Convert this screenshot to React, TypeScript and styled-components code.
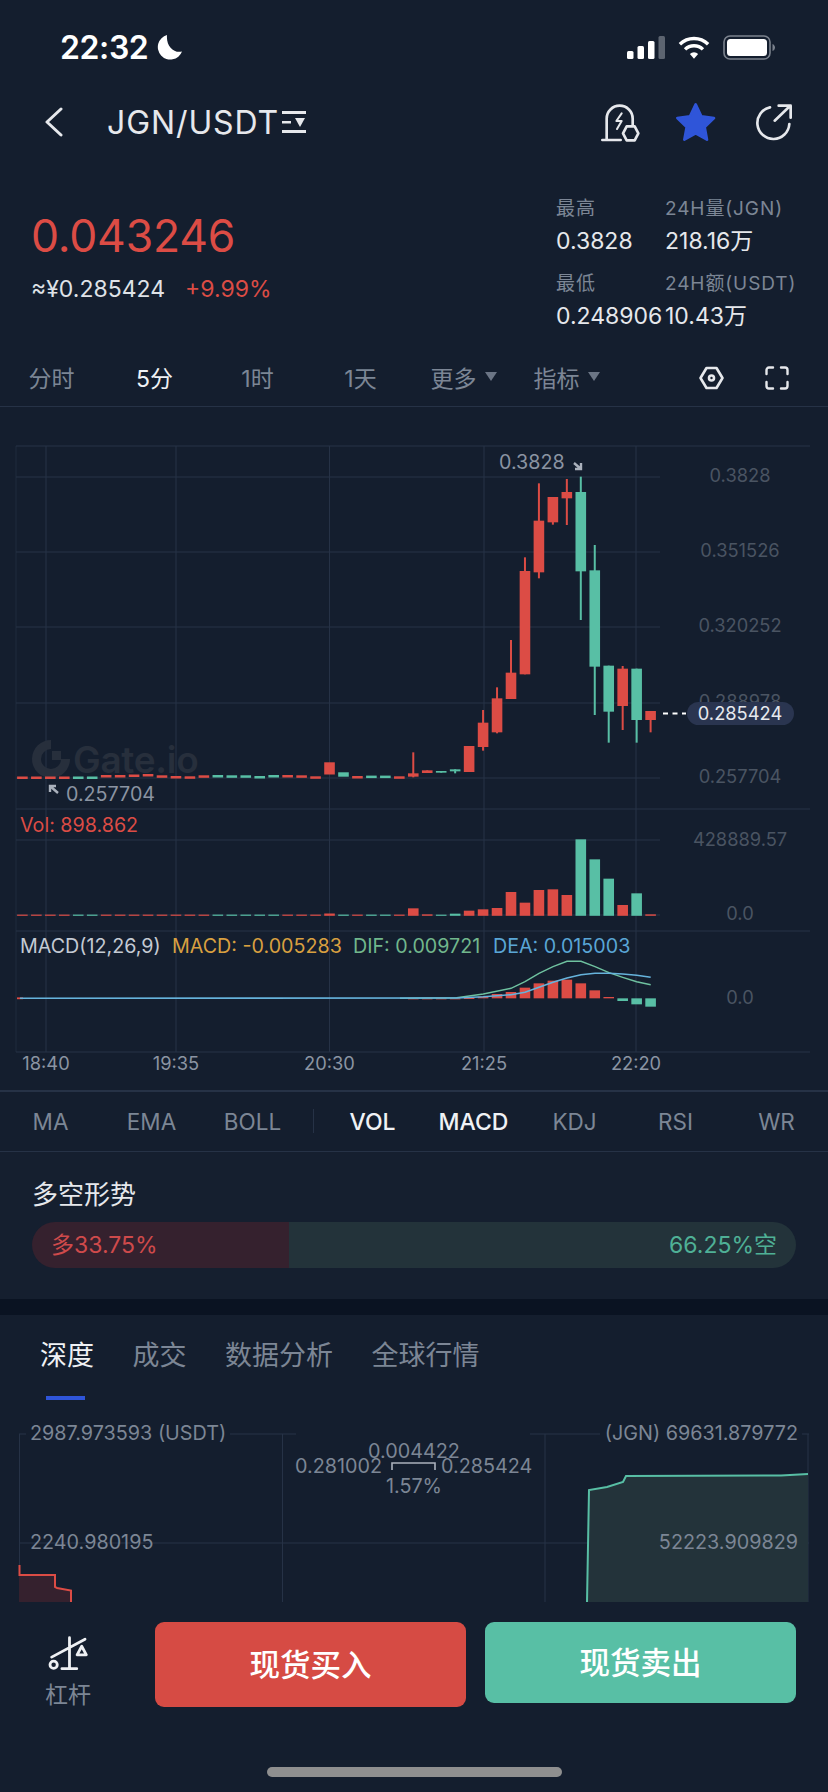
import React from "react";
import styled, { createGlobalStyle } from "styled-components";

const RED = "#dc4c45";
const GREEN = "#58bfa5";
const GRID = "#263246";
const AXIS = "#4a5462";
const MUTED = "#7c8695";
const SANS = `Inter, "Noto Sans CJK SC", sans-serif`;

const GlobalStyle = createGlobalStyle`
  html, body {
    margin: 0;
    padding: 0;
    background: #141e2e;
  }
`;

// candles: [colour, open/top, close/bottom, wick top, wick bottom] in page px
type Candle = { up: boolean; top: number; bottom: number; hi?: number; lo?: number };

const flat = (up: boolean, y: number): Candle => ({ up, top: y, bottom: y + 2.5 });
const fromZoom = (up: boolean, top: number, bottom: number, hi: number, lo: number): Candle => ({
  up,
  top: 440 + top / 3,
  bottom: 440 + bottom / 3,
  hi: 440 + hi / 3,
  lo: 440 + lo / 3,
});

const candles: Candle[] = [
  flat(true, 776.5), flat(true, 776.5), flat(true, 776.5), flat(true, 776.5),
  flat(false, 776.5), flat(false, 776.5), { up: true, top: 775, bottom: 777.5 },
  flat(true, 775), flat(true, 774.5), flat(true, 774), flat(true, 775.3),
  flat(true, 776), flat(true, 776.3), flat(true, 775.3), flat(false, 775),
  flat(false, 775.3), flat(false, 775.3), flat(false, 776), flat(false, 775),
  flat(true, 775), flat(true, 775.3), flat(true, 776.3),
  { up: true, top: 762.3, bottom: 774.5 },
  { up: false, top: 772.3, bottom: 776.7 },
  flat(true, 776), flat(false, 775.6), flat(false, 775.6), flat(true, 776.3),
  fromZoom(true, 1000, 1010, 937, 1012),
  fromZoom(true, 991, 999, 991, 999),
  fromZoom(false, 993, 998, 993, 998),
  fromZoom(false, 988, 994, 988, 1000),
  fromZoom(true, 918, 996, 918, 996),
  fromZoom(true, 848, 921, 810, 932),
  fromZoom(true, 775, 877, 742, 880),
  fromZoom(true, 698, 777, 600, 777),
  fromZoom(true, 393, 703, 352, 703),
  fromZoom(true, 242, 397, 130, 415),
  fromZoom(true, 171, 247, 171, 254),
  fromZoom(true, 156, 175, 117, 255),
  fromZoom(false, 156, 394, 110, 540),
  fromZoom(false, 391, 680, 315, 825),
  fromZoom(false, 677, 815, 677, 908),
  fromZoom(true, 686, 798, 678, 870),
  fromZoom(false, 686, 840, 686, 908),
  fromZoom(true, 813, 840, 813, 877),
];

// volume bar tops for the last 18 candles, everything before sits on the base line
const volTops = [265, 283, 284, 281, 272, 268, 264, 216, 248, 210, 208, 225, 58, 118, 176, 255, 220, 283];
const macdTops = [535, 535, 535, 535, 534, 530, 522, 516, 503, 490, 482, 479, 490, 511, 531, 543, 553, 560];

const difLine = "400,998.3 456.7,997.7 483.3,994 511,988.3 525,981.7 539,973.3 553,966.7 567,961.3 581,961.3 595,966.7 609,972.7 622.7,977.3 636.7,981.7 650.7,984.7";
const deaLine = "20,998.3 456.7,998 483.3,996.7 511,994.7 525,992.3 539,987.3 553,982.3 567,978 581,974.7 595,973.3 609,973.3 622.7,974 636.7,975.3 650.7,977.3";

const candleX = (i: number) => 22.4 + 13.96 * i;

const priceRows = [477, 552, 627, 703, 778];
const priceLabels = ["0.3828", "0.351526", "0.320252", "0.288978", "0.257704"];
const timeCols = [46, 176, 329.5, 484, 636];
const timeLabels = ["18:40", "19:35", "20:30", "21:25", "22:20"];

const KlineChart: React.FC = () => (
  <ChartSvg viewBox="0 407 828 683">
    {[446, 809, 931, 1052].map((y) => (
      <line key={y} x1="16" x2="810" y1={y} y2={y} stroke={GRID} />
    ))}
    {[...priceRows, 840, 915].map((y) => (
      <line key={y} x1="16" x2="660" y1={y} y2={y} stroke={GRID} />
    ))}
    <line x1="16" x2="16" y1="446" y2="1052" stroke={GRID} opacity="0.6" />
    {timeCols.map((x) => (
      <line key={x} x1={x} x2={x} y1="446" y2="1052" stroke={GRID} />
    ))}

    <g fill="#272f3c">
      <path d="M51 740a19 19 0 1 0 19 19h-9a10 10 0 1 1-10-10z" />
      <rect x="52" y="751" width="9" height="9" />
    </g>
    <WaterMark x="73" y="773">Gate.io</WaterMark>

    {candles.map((c, i) => {
      const x = candleX(i);
      const color = c.up ? RED : GREEN;
      return (
        <g key={i} fill={color}>
          {c.hi !== undefined && (
            <rect x={x - 1} y={c.hi} width="2" height={(c.lo ?? c.bottom) - c.hi} />
          )}
          <rect x={x - 5.3} y={c.top} width="10.6" height={c.bottom - c.top} />
        </g>
      );
    })}

    {candles.map((c, i) => {
      const x = candleX(i);
      const offset = i - 28;
      const top = offset >= 0 ? 820 + volTops[offset] / 3 : i === 22 ? 913.5 : 914.6;
      return (
        <rect key={i} x={x - 5.3} y={top} width="10.6" height={915.8 - top} fill={c.up ? RED : GREEN} />
      );
    })}

    <rect x="17" y="997.4" width="6" height="1.800" fill={RED} />
    {macdTops.map((t, n) => {
      const x = candleX(n + 28);
      const top = Math.min(t, 535);
      const bottom = Math.max(t, 535);
      return (
        <rect
          key={n}
          x={x - 5.3}
          y={820 + top / 3}
          width="10.6"
          height={Math.max((bottom - top) / 3, 1)}
          fill={t > 535 ? GREEN : RED}
        />
      );
    })}
    <polyline points={difLine} fill="none" stroke="#6fc2a0" strokeWidth="1.4" />
    <polyline points={deaLine} fill="none" stroke="#66b3dc" strokeWidth="1.6" />

    <HighArrow d="M574 463l7 6m0-6v6h-6" />
    <LegendText x="499" y="469" fill="#8b94a2">0.3828</LegendText>
    <HighArrow d="M58 793l-8-7m0 6v-6h6" />
    <LegendText x="66" y="801" fill="#8b94a2">0.257704</LegendText>

    {priceRows.map((y, i) => (
      <AxisText key={y} x="740" y={y + 5} fill={AXIS} textAnchor="middle">
        {priceLabels[i]}
      </AxisText>
    ))}
    <line x1="663" x2="686" y1="713.5" y2="713.5" stroke="#fff" strokeWidth="2" strokeDasharray="5 4.5" />
    <rect x="687" y="702" width="107" height="23" rx="11.5" fill="#2a3550" />
    <AxisText x="740" y="719.5" fill="#e6e9ee" textAnchor="middle">0.285424</AxisText>

    <LegendText x="20" y="831.500" fill={RED}>Vol: 898.862</LegendText>
    <AxisText x="740" y="846" fill={AXIS} textAnchor="middle">428889.57</AxisText>
    <AxisText x="740" y="920" fill={AXIS} textAnchor="middle">0.0</AxisText>

    <LegendText x="20" y="952.500" fill="#c4cad3">MACD(12,26,9)</LegendText>
    <LegendText x="172" y="952.500" fill="#d9a040">MACD: -0.005283</LegendText>
    <LegendText x="353" y="952.500" fill="#71b78c">DIF: 0.009721</LegendText>
    <LegendText x="493" y="952.500" fill="#5aa6d6">DEA: 0.015003</LegendText>
    <AxisText x="740" y="1004" fill={AXIS} textAnchor="middle">0.0</AxisText>

    {timeCols.map((x, i) => (
      <AxisText key={x} x={x} y="1070" fill="#8b94a2" textAnchor="middle">
        {timeLabels[i]}
      </AxisText>
    ))}
  </ChartSvg>
);

const DepthChart: React.FC = () => (
  <DepthSvg viewBox="0 1402 828 200">
    <line x1="19" x2="296" y1="1434" y2="1434" stroke={GRID} />
    <line x1="530" x2="809" y1="1434" y2="1434" stroke={GRID} />
    <line x1="19" x2="809" y1="1543" y2="1543" stroke={GRID} />
    {[19.5, 282.5, 545, 808].map((x) => (
      <line key={x} x1={x} x2={x} y1="1434" y2="1602" stroke={GRID} />
    ))}
    <path d="M19 1565v10h36v12l2 1 14 2v12H19z" fill="#35212e" />
    <path d="M19.5 1565v10H55v12l2 1 14 2.5V1602" fill="none" stroke={RED} strokeWidth="2" />
    <path d="M587 1602l2-112 18-3 16-5 3-6 155-.5 27-1.5V1602z" fill="#23333a" />
    <path d="M587 1602l2-112 18-3 16-5 3-6 155-.5 27-1.5" fill="none" stroke={GREEN} strokeWidth="2" />

    <rect x="26" y="1422" width="204" height="24" fill="#141e2e" />
    <rect x="600" y="1422" width="202" height="24" fill="#141e2e" />
    <DepthText x="30" y="1440" fill={MUTED}>2987.973593 (USDT)</DepthText>
    <DepthText x="798" y="1440" fill={MUTED} textAnchor="end">(JGN) 69631.879772</DepthText>
    <DepthText x="414" y="1458" fill={MUTED} textAnchor="middle">0.004422</DepthText>
    <DepthText x="382" y="1473" fill={MUTED} textAnchor="end">0.281002</DepthText>
    <path d="M392 1470v-7h43v7" fill="none" stroke="#aab1bc" strokeWidth="1.6" />
    <DepthText x="441" y="1473" fill={MUTED}>0.285424</DepthText>
    <DepthText x="414" y="1493" fill={MUTED} textAnchor="middle">1.57%</DepthText>
    <DepthText x="30" y="1549" fill={MUTED}>2240.980195</DepthText>
    <DepthText x="798" y="1549" fill={MUTED} textAnchor="end">52223.909829</DepthText>
  </DepthSvg>
);

const SignalIcon = () => (
  <svg width="38" height="23" viewBox="0 0 38 23" fill="#fff">
    <rect x="0" y="15" width="6.500" height="8" rx="1.500" />
    <rect x="10.500" y="10" width="6.500" height="13" rx="1.500" />
    <rect x="21" y="5" width="6.500" height="18" rx="1.500" />
    <rect x="31.500" y="0" width="6.500" height="23" rx="1.500" fill="#5c6470" />
  </svg>
);

const WifiIcon = () => (
  <svg width="32" height="23" viewBox="0 0 34 24" fill="none" stroke="#fff" strokeWidth="3.6">
    <path d="M2 8.500a21.500 21.500 0 0 1 30 0" />
    <path d="M7.500 14a13.500 13.500 0 0 1 19 0" />
    <path d="M12.600 19a6 6 0 0 1 8.800 0L17 24z" fill="#fff" stroke="none" />
  </svg>
);

const BatteryIcon = () => (
  <svg width="52" height="25" viewBox="0 0 52 25">
    <rect x="1" y="1" width="46" height="23" rx="6" fill="none" stroke="#7b828d" strokeWidth="1.6" />
    <rect x="4" y="4" width="40" height="17" rx="3.500" fill="#fff" />
    <path d="M49.500 9v7c1.500-.5 2.500-2 2.500-3.500S51 9.500 49.500 9z" fill="#7b828d" />
  </svg>
);

const MoonIcon = () => (
  <svg width="26" height="26" viewBox="0 0 26 26">
    <path d="M10 1a12.500 12.500 0 1 0 15 16.500c-8 2-16-5-15-16.500z" fill="#fff" />
  </svg>
);

const BellIcon = () => (
  <svg width="41.7" height="41.7" viewBox="90 60 125 125" fill="none" stroke="#e6e8ec" strokeWidth="8" strokeLinecap="round" strokeLinejoin="round">
    <path d="M97 177h55M110 175v-62a39 39 0 0 1 78 0v20" />
    <path d="M155 97l-16 23h16l-14 24" strokeWidth="6" />
    <path d="M170 136h24l11 21-11 21h-24l-11-21z" />
  </svg>
);

const StarIcon = () => (
  <svg width="45" height="43.300" viewBox="310 55 135 130">
    <path
      d="M378 68l17 36 38 5-28 27 7 38-34-19-34 19 7-38-28-27 38-5z"
      fill="#2f55d9"
      stroke="#2f55d9"
      strokeWidth="8"
      strokeLinejoin="round"
    />
  </svg>
);

const ShareIcon = () => (
  <svg width="45" height="40" viewBox="537 68 135 120" fill="none" stroke="#e6e8ec" strokeWidth="8" strokeLinecap="round" strokeLinejoin="round">
    <path d="M600 84a48 48 0 1 0 58 50" />
    <path d="M614 124l46-44M626 79h36v36" />
  </svg>
);

const ChevronLeft = () => (
  <svg width="20" height="30" viewBox="0 0 20 30" fill="none" stroke="#e6e8ec" strokeWidth="3" strokeLinecap="round" strokeLinejoin="round">
    <path d="M17 2L3 15l14 13" />
  </svg>
);

const PairMark = () => (
  <svg width="24" height="24" viewBox="0 0 24 24" fill="#e6e8ec">
    <rect x="0" y="1" width="24" height="3" />
    <rect x="0" y="11" width="9" height="2.500" />
    <path d="M13 8h10l-5 9z" />
    <rect x="0" y="20" width="24" height="3" />
  </svg>
);

const GaugeIcon = () => (
  <svg width="27" height="25" viewBox="0 0 27 25" fill="none" stroke="#e6e8ec" strokeWidth="2.600" strokeLinecap="round" strokeLinejoin="round">
    <path d="M8.500 2h10l6 10-6 10h-10l-6-10z" />
    <circle cx="13.500" cy="12" r="2.500" />
  </svg>
);

const ExpandIcon = () => (
  <svg width="24" height="24" viewBox="0 0 24 24" fill="none" stroke="#e6e8ec" strokeWidth="2.400" strokeLinecap="round" strokeLinejoin="round">
    <path d="M1.500 8V4a2.500 2.500 0 0 1 2.500-2.500h4M16 1.500h4A2.500 2.500 0 0 1 22.500 4v4M22.500 16v4a2.500 2.500 0 0 1-2.500 2.500h-4M8 22.500H4A2.500 2.500 0 0 1 1.500 20v-4" />
  </svg>
);

const LeverIcon = () => (
  <svg width="43" height="38" viewBox="50 25 130 115" fill="none" stroke="#eef0f3" strokeWidth="8.500" strokeLinecap="round" strokeLinejoin="round">
    <path d="M64 95L165 41M118 36v94M95 130h45" />
    <circle cx="70" cy="118" r="11" />
    <path d="M155 62l-14 26h28z" />
  </svg>
);

const intervals = [
  { label: "分时" },
  { label: "5分", active: true },
  { label: "1时" },
  { label: "1天" },
  { label: "更多", menu: true },
  { label: "指标", menu: true },
];

const indicators = [
  { label: "MA" },
  { label: "EMA" },
  { label: "BOLL", divider: true },
  { label: "VOL", active: true },
  { label: "MACD", active: true },
  { label: "KDJ" },
  { label: "RSI" },
  { label: "WR" },
];

const stats = [
  { label: "最高", value: "0.3828" },
  { label: "24H量(JGN)", value: "218.16万" },
  { label: "最低", value: "0.248906" },
  { label: "24H额(USDT)", value: "10.43万" },
];

const App: React.FC = () => {
  return (
    <Page>
      <GlobalStyle />
      <StatusBar>
        <Clock>
          22:32
          <MoonIcon />
        </Clock>
        <StatusIcons>
          <SignalIcon />
          <WifiIcon />
          <BatteryIcon />
        </StatusIcons>
      </StatusBar>

      <NavBar>
        <BackButton>
          <ChevronLeft />
        </BackButton>
        <PairTitle>JGN/USDT</PairTitle>
        <PairMark />
        <NavActions>
          <BellIcon />
          <StarIcon />
          <ShareIcon />
        </NavActions>
      </NavBar>

      <Ticker>
        <PriceBlock>
          <LastPrice>0.043246</LastPrice>
          <PriceSub>
            <span>≈¥0.285424</span>
            <Change>+9.99%</Change>
          </PriceSub>
        </PriceBlock>
        <Stats>
          {stats.map((s) => (
            <StatCell key={s.label}>
              <StatLabel>{s.label}</StatLabel>
              <StatValue>{s.value}</StatValue>
            </StatCell>
          ))}
        </Stats>
      </Ticker>

      <IntervalBar>
        {intervals.map((item) => (
          <IntervalItem key={item.label} $active={item.active}>
            {item.label}
            {item.menu && <Caret />}
          </IntervalItem>
        ))}
        <ChartTools>
          <GaugeIcon />
          <ExpandIcon />
        </ChartTools>
      </IntervalBar>

      <KlineChart />

      <IndicatorBar>
        {indicators.map((item) => (
          <IndicatorItem key={item.label} $active={item.active} $divider={item.divider}>
            {item.label}
          </IndicatorItem>
        ))}
      </IndicatorBar>

      <TrendSection>
        <SectionTitle>多空形势</SectionTitle>
        <TrendBar>
          <LongPart style={{ width: `${(257 / 764) * 100}%` }}>多33.75%</LongPart>
          <ShortPart>66.25%空</ShortPart>
        </TrendBar>
      </TrendSection>

      <SectionGap />

      <DepthTabs>
        <DepthTab $active>深度</DepthTab>
        <DepthTab>成交</DepthTab>
        <DepthTab>数据分析</DepthTab>
        <DepthTab>全球行情</DepthTab>
      </DepthTabs>
      <DepthChart />

      <ActionBar>
        <Lever>
          <LeverIcon />
          <LeverLabel>杠杆</LeverLabel>
        </Lever>
        <TradeButton $buy>现货买入</TradeButton>
        <TradeButton>现货卖出</TradeButton>
      </ActionBar>

      <HomeIndicator />
    </Page>
  );
};

const Page = styled.div`
  width: 828px;
  height: 1792px;
  overflow: hidden;
  display: flex;
  flex-direction: column;
  background: #141e2e;
  font-family: ${SANS};
  color: #e6e8ec;
`;

const StatusBar = styled.div`
  height: 94px;
  flex: none;
  display: flex;
  align-items: center;
  justify-content: space-between;
  padding: 0 53px 0 60px;
  box-sizing: border-box;
`;

const Clock = styled.div`
  display: flex;
  align-items: center;
  gap: 9px;
  font-size: 32px;
  font-weight: 600;
  letter-spacing: -0.4px;
  color: #fff;
`;

const StatusIcons = styled.div`
  display: flex;
  align-items: center;
  gap: 13px;
`;

const NavBar = styled.div`
  height: 56px;
  flex: none;
  display: flex;
  align-items: center;
  padding: 0 34px 0 44px;
`;

const BackButton = styled.div`
  display: flex;
  width: 63px;
`;

const PairTitle = styled.div`
  font-size: 32px;
  font-weight: 400;
  letter-spacing: 0.9px;
  margin-right: 3px;
`;

const NavActions = styled.div`
  margin-left: auto;
  display: flex;
  align-items: center;
  gap: 31px;
`;

const Ticker = styled.div`
  height: 200px;
  flex: none;
  display: flex;
  justify-content: space-between;
  padding: 0 0 0 31px;
`;

const PriceBlock = styled.div`
  padding-top: 55px;
`;

const LastPrice = styled.div`
  font-size: 44.5px;
  line-height: 62px;
  color: ${RED};
  letter-spacing: -0.2px;
`;

const PriceSub = styled.div`
  display: flex;
  gap: 20px;
  margin-top: 8px;
  font-size: 23px;
  line-height: 28px;
  color: #dfe2e7;
`;

const Change = styled.span`
  color: ${RED};
`;

const Stats = styled.div`
  width: 272px;
  display: grid;
  grid-template-columns: 109px 163px;
  row-gap: 10px;
  padding-top: 44px;
  align-content: start;
  box-sizing: border-box;
`;

const StatCell = styled.div`
  display: flex;
  flex-direction: column;
`;

const StatLabel = styled.div`
  font-size: 19px;
  line-height: 29px;
  letter-spacing: 0.9px;
  color: ${MUTED};
  white-space: nowrap;
`;

const StatValue = styled.div`
  font-size: 23px;
  line-height: 36px;
  color: #e6e8ec;
  white-space: nowrap;
`;

const IntervalBar = styled.div`
  height: 56px;
  flex: none;
  display: flex;
  align-items: center;
  border-bottom: 1px solid ${GRID};
`;

const IntervalItem = styled.div<{ $active?: boolean }>`
  width: 103px;
  margin-top: -3px;
  display: flex;
  align-items: center;
  justify-content: center;
  gap: 8px;
  font-size: 23px;
  color: ${(p) => (p.$active ? "#f0f2f5" : MUTED)};
`;

const Caret = styled.span`
  width: 0;
  height: 0;
  border-left: 6.5px solid transparent;
  border-right: 6.5px solid transparent;
  border-top: 9px solid #6b7585;
`;

const ChartTools = styled.div`
  margin-left: auto;
  display: flex;
  align-items: center;
  gap: 40px;
  padding-right: 39px;
`;

const ChartSvg = styled.svg`
  display: block;
  width: 828px;
  height: 683px;
  flex: none;
  font-family: ${SANS};
  border-bottom: 2px solid ${GRID};
  box-sizing: content-box;
`;

const AxisText = styled.text`
  font-size: 18.3px;
`;

const LegendText = styled.text`
  font-size: 19.7px;
`;

const DepthText = styled.text`
  font-size: 19.8px;
`;

const WaterMark = styled.text`
  font-size: 37px;
  font-weight: 600;
  letter-spacing: -0.3px;
  fill: #272f3c;
`;

const HighArrow = styled.path`
  fill: none;
  stroke: #aab1bc;
  stroke-width: 2.4;
`;

const IndicatorBar = styled.div`
  height: 60px;
  flex: none;
  box-sizing: border-box;
  display: flex;
  align-items: center;
  border-bottom: 1px solid ${GRID};
`;

const IndicatorItem = styled.div<{ $active?: boolean; $divider?: boolean }>`
  position: relative;
  flex: none;
  width: 101px;
  margin-right: ${(p) => (p.$divider ? "19px" : "0")};
  text-align: center;
  font-size: ${(p) => (p.$active ? "23px" : "22.5px")};
  font-weight: ${(p) => (p.$active ? 500 : 400)};
  color: ${(p) => (p.$active ? "#f0f2f5" : MUTED)};
  &::after {
    content: "";
    display: ${(p) => (p.$divider ? "block" : "none")};
    position: absolute;
    right: -11px;
    top: 1px;
    width: 1px;
    height: 24px;
    background: ${GRID};
  }
`;

const TrendSection = styled.div`
  height: 147px;
  flex: none;
  box-sizing: border-box;
  padding: 26px 32px 0;
  background: #151f2f;
`;

const SectionTitle = styled.div`
  font-size: 26px;
  line-height: 34px;
  color: #e6e8ec;
`;

const TrendBar = styled.div`
  margin-top: 10px;
  height: 46px;
  display: flex;
  border-radius: 23px;
  overflow: hidden;
  font-size: 23px;
  line-height: 46px;
`;

const LongPart = styled.div`
  flex: none;
  background: #35212e;
  color: #cf4a4b;
  padding-left: 19px;
  box-sizing: border-box;
`;

const ShortPart = styled.div`
  flex: 1;
  background: #23333a;
  color: #4fb096;
  text-align: right;
  padding-right: 19px;
`;

const SectionGap = styled.div`
  height: 16px;
  flex: none;
  background: #0a1322;
`;

const DepthTabs = styled.div`
  height: 87px;
  flex: none;
  box-sizing: border-box;
  display: flex;
  gap: 38.500px;
  padding: 24px 0 0 40px;
`;

const DepthTab = styled.div<{ $active?: boolean }>`
  position: relative;
  font-size: 27px;
  line-height: 34px;
  color: ${(p) => (p.$active ? "#f0f2f5" : MUTED)};
  &::after {
    content: "";
    display: ${(p) => (p.$active ? "block" : "none")};
    position: absolute;
    left: 6px;
    right: 9px;
    top: 57px;
    height: 4px;
    background: #2f55d9;
  }
`;

const DepthSvg = styled.svg`
  display: block;
  width: 828px;
  height: 200px;
  flex: none;
  font-family: ${SANS};
`;

const ActionBar = styled.div`
  flex: none;
  height: 165px;
  box-sizing: border-box;
  padding: 20px 32px 0 0;
  display: flex;
  align-items: flex-start;
  gap: 19px;
`;

const Lever = styled.div`
  width: 136px;
  flex: none;
  display: flex;
  flex-direction: column;
  align-items: center;
  padding-top: 12px;
`;

const LeverLabel = styled.div`
  font-size: 23px;
  line-height: 30px;
  margin-top: 8px;
  color: ${MUTED};
`;

const TradeButton = styled.div<{ $buy?: boolean }>`
  flex: 1;
  height: ${(p) => (p.$buy ? "85px" : "81px")};
  line-height: ${(p) => (p.$buy ? "85px" : "81px")};
  border-radius: 9px;
  text-align: center;
  font-size: 30.5px;
  font-weight: 500;
  color: #fff;
  background: ${(p) => (p.$buy ? "#d64b44" : "#58bfa5")};
`;

const HomeIndicator = styled.div`
  width: 295px;
  height: 10px;
  flex: none;
  align-self: center;
  border-radius: 5px;
  background: #8f8f8f;
`;

export default App;
